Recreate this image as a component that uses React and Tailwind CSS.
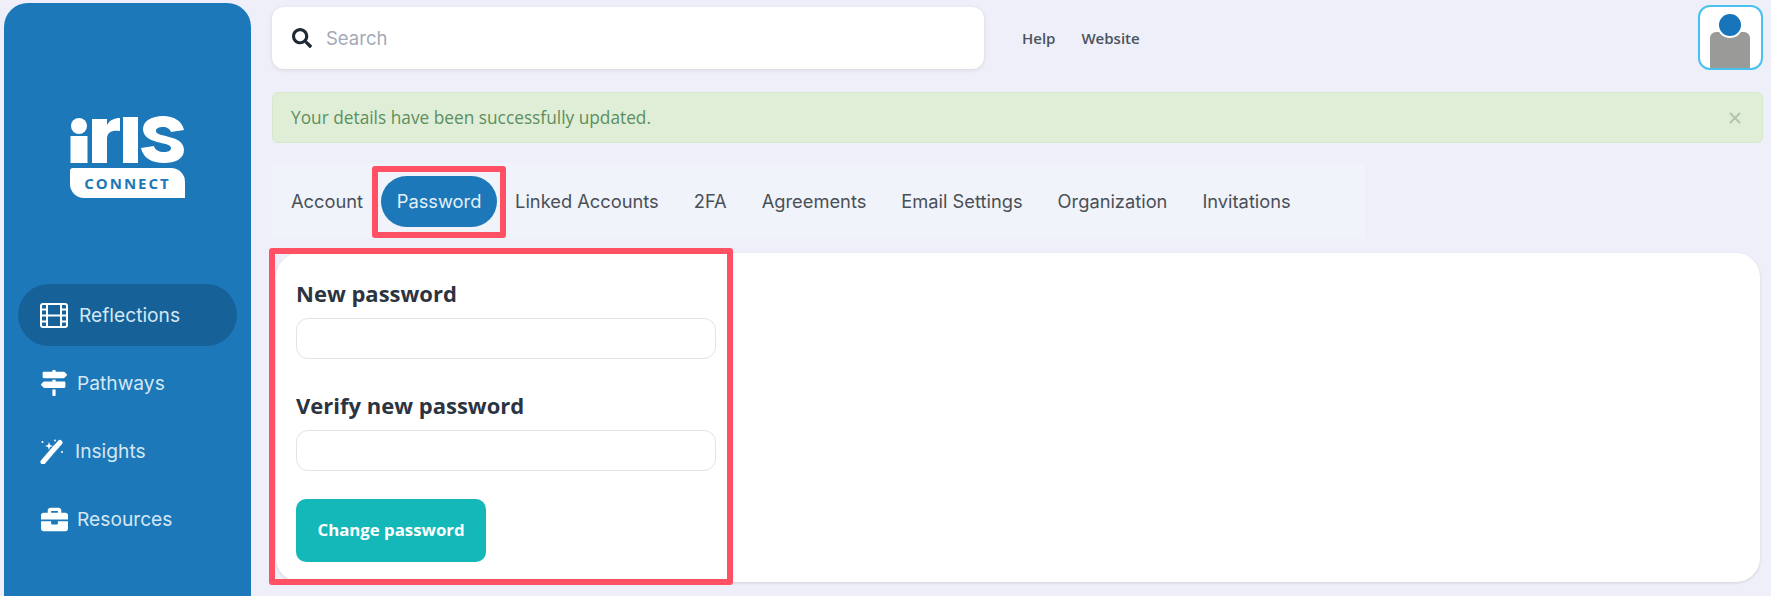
import React from "react";
import { X } from "lucide-react";
import { FaSearch, FaMapSigns, FaBriefcase } from "react-icons/fa";

const inter = "font-['Inter',sans-serif]";
const open = "font-['Open_Sans',sans-serif]";

function Logo() {
  return (
    <div className="flex flex-col w-[115px]">
      <svg width="115" height="47" viewBox="0 0 115 47" className="block">
        <circle cx="9" cy="10" r="8" fill="white" />
        <rect x="0.5" y="20" width="17" height="27" fill="white" />
        <path d="M22 3h15v6c3-5 7-7 13-7v13c-8-1-13 1-13 8v24H22z" fill="white" />
        <rect x="53" y="1" width="15" height="46" fill="white" />
        <path d="M93 0c11 0 19 5 21 14l-13 2c-1-3-4-5-8-5-4 0-7 1-7 4 0 7 28 3 28 19 0 9-9 13-20 13-12 0-21-5-23-15l13-2c1 4 5 6 10 6 4 0 7-1 7-4 0-7-28-3-28-19C73 5 82 0 93 0z" fill="white" />
      </svg>
      <div className={`mt-[5px] h-[30px] bg-white rounded-tl-[3px] rounded-tr-[14px] rounded-bl-[14px] flex items-center justify-center text-[#1c78b9] text-[15px] font-bold tracking-[2px] ${open}`}>CONNECT</div>
    </div>
  );
}

function FilmIcon() {
  return (
    <svg width="28" height="25" viewBox="0 0 28 25" fill="none" stroke="white" strokeWidth="2">
      <rect x="1" y="1" width="26" height="23" rx="2" />
      <path d="M7 1v23M21 1v23M7 12.5h14M1 6.5h6M1 12.5h6M1 18.5h6M21 6.5h6M21 12.5h6M21 18.5h6" />
    </svg>
  );
}

function WandIcon() {
  return (
    <svg width="24" height="25" viewBox="0 0 24 25" fill="white">
      <path d="M3 23 L15 9" stroke="white" strokeWidth="5" strokeLinecap="round" />
      <path d="M16 8 L20 3.5" stroke="white" strokeWidth="5" strokeLinecap="round" />
      <path d="M9 3l1 3 3 1-3 1-1 3-1-3-3-1 3-1z" />
      <circle cx="2.5" cy="3" r="1" />
      <circle cx="15" cy="1.5" r="0.9" />
      <circle cx="22" cy="13" r="1" />
    </svg>
  );
}

function NavItem({ icon, label, active, gap, iconWidth }) {
  return (
    <div className={`flex items-center h-[62px] rounded-full pl-[22px] ${active ? "bg-[#166298]" : ""} ${inter} text-[19.2px] text-[#d5e7f3]`}>
      <span className="flex justify-center text-white" style={{ width: iconWidth, marginRight: gap }}>{icon}</span>
      <span>{label}</span>
    </div>
  );
}

function Field({ label, className }) {
  return (
    <div className={className}>
      <div className={`text-[22px] leading-[26px] font-bold text-[#2b3440] ${open}`}>{label}</div>
      <div className="mt-[12px] h-[41px] rounded-[12px] border border-[#e2e3e6] bg-white"></div>
    </div>
  );
}

const tabs = ["Linked Accounts", "2FA", "Agreements", "Email Settings", "Organization", "Invitations"];

export default function App() {
  return (
    <div className="flex h-[596px] w-[1771px] overflow-hidden bg-[#eeeff8]">
      <aside className="ml-[4px] mt-[3px] w-[247px] h-[593px] bg-[#1c78b9] rounded-t-[24px] shrink-0 flex flex-col px-[14px]">
        <div className="mt-[113px] self-center"><Logo /></div>
        <nav className="mt-[86px] flex flex-col gap-[6px]">
          <NavItem active label="Reflections" iconWidth={28} gap={11} icon={<FilmIcon />} />
          <NavItem label="Pathways" iconWidth={28} gap={9} icon={<FaMapSigns size={26} />} />
          <NavItem label="Insights" iconWidth={24} gap={11} icon={<WandIcon />} />
          <NavItem label="Resources" iconWidth={28} gap={9} icon={<FaBriefcase size={27} />} />
        </nav>
      </aside>

      <main className="ml-[21px] w-[1491px] shrink-0 flex flex-col">
        <div className="mt-[7px] flex items-start">
          <div className="h-[62px] w-[712px] bg-white rounded-[12px] shadow-[0_1px_4px_rgba(0,0,0,0.1)] flex items-center pl-[20px]">
            <FaSearch size={20} className="text-[#1f2a37]" />
            <span className={`ml-[14px] pt-[2px] text-[18.5px] text-[#a3a9b5] ${inter}`}>Search</span>
          </div>
          <div className={`ml-[38px] h-[62px] flex items-center gap-[26px] text-[15px] font-semibold text-[#4a5360] ${open}`}>
            <span>Help</span>
            <span>Website</span>
          </div>
          <div className="ml-auto -mt-[2px] w-[65px] h-[65px] bg-white rounded-[12px] border-2 border-[#4ac0ee] overflow-hidden flex flex-col items-center">
            <svg width="61" height="61" viewBox="0 0 61 61">
              <rect x="10" y="25" width="40" height="40" rx="6" fill="#9a9a98" />
              <circle cx="30" cy="18" r="12" fill="#1874bb" stroke="white" strokeWidth="2" />
            </svg>
          </div>
        </div>

        <div className={`mt-[22px] h-[51px] bg-[#e0eed8] border border-[#d6e9cb] rounded-[6px] flex items-center justify-between pl-[18px] pr-[18px] text-[17.3px] text-[#5c8f5e] ${open}`}>
          <span>Your details have been successfully updated.</span>
          <X size={18} strokeWidth={2.5} className="text-[#b3c4ad]" />
        </div>

        <div className={`mt-[20px] h-[76px] w-[1093px] bg-[#f0f3f9] flex items-center pl-[19px] pt-[1px] text-[18.3px] text-[#4a4f57] ${inter}`}>
          <span>Account</span>
          <div className="ml-[9px] w-[134px] h-[72px] border-[6px] border-[#ff5064] rounded-[3px] flex items-center justify-center">
            <div className="w-[116px] h-[51px] rounded-full bg-[#1c78b9] text-[#e3f0f8] flex items-center justify-center">Password</div>
          </div>
          <div className="ml-[9px] flex items-center gap-[35px]">
            {tabs.map((t) => <span key={t}>{t}</span>)}
          </div>
        </div>

        <div className="relative mt-[14px] h-[329px] w-[1484px] ml-[4px] bg-white rounded-[24px] shadow-[0_1px_3px_rgba(0,0,0,0.12)] pl-[20px] pr-[1044px] pt-[27px]">
          <Field label="New password" />
          <Field label="Verify new password" className="mt-[33px]" />
          <button className={`mt-[28px] w-[190px] h-[63px] pb-[2px] rounded-[10px] bg-[#15b8b8] text-white text-[16.8px] font-bold ${open}`}>Change password</button>
          <div className="absolute left-[-7px] top-[-5px] w-[464px] h-[337px] border-[6px] border-[#ff5064] rounded-[3px]"></div>
        </div>
      </main>
    </div>
  );
}
